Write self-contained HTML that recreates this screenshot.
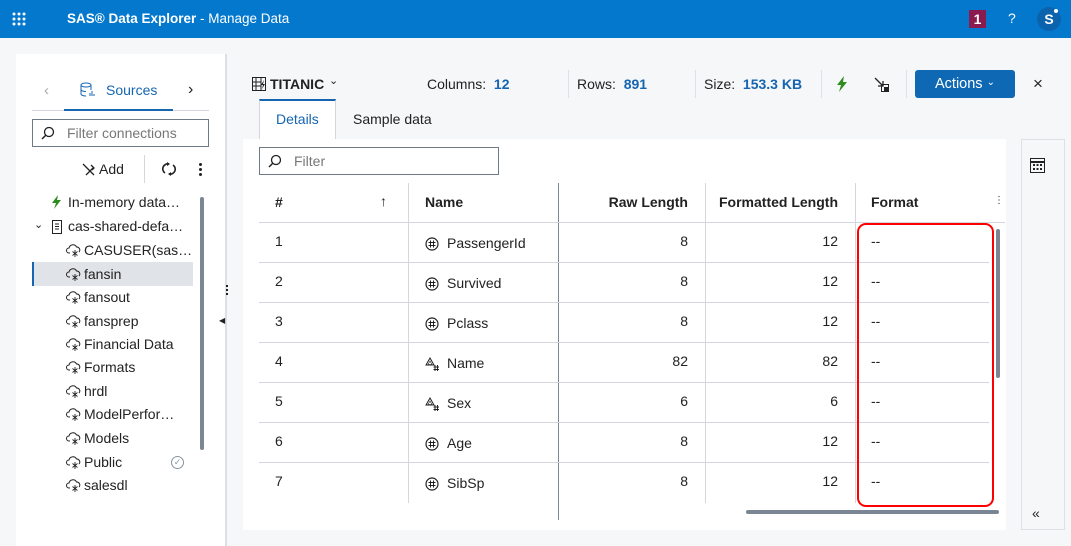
<!DOCTYPE html>
<html><head><meta charset="utf-8"><style>
*{box-sizing:border-box;margin:0;padding:0}
body{width:1071px;height:546px;overflow:hidden;background:#f6f7f9;font-family:"Liberation Sans",sans-serif;color:#222;font-size:14px;position:relative}
.a{position:absolute}
.hdr{left:0;top:0;width:1071px;height:38px;background:#0378cd;color:#fff}
.t{white-space:nowrap}
.cell{position:absolute;font-size:14px;white-space:nowrap}
.hl{position:absolute;height:1px;background:#d3d7dd}
.vl{position:absolute;width:1px;background:#d3d7dd}
</style></head><body>
<div class="a hdr">
 <svg class="a" style="left:12px;top:12px" width="14" height="14"><g fill="#fff"><circle cx="2" cy="2" r="1.5"/><circle cx="7" cy="2" r="1.5"/><circle cx="12" cy="2" r="1.5"/><circle cx="2" cy="7" r="1.5"/><circle cx="7" cy="7" r="1.5"/><circle cx="12" cy="7" r="1.5"/><circle cx="2" cy="12" r="1.5"/><circle cx="7" cy="12" r="1.5"/><circle cx="12" cy="12" r="1.5"/></g></svg>
 <div class="a t" style="left:67px;top:11px;font-size:13.5px"><b>SAS® Data Explorer</b> - Manage Data</div>
 <div class="a" style="left:969px;top:10px;width:17px;height:18px;background:#8b1a4e;color:#fff;font-weight:bold;font-size:14px;text-align:center;line-height:18px">1</div>
 <div class="a" style="left:1008px;top:10px;font-size:14px">?</div>
 <div class="a" style="left:1037px;top:7px;width:24px;height:24px;border-radius:12px;background:#0b62ad;text-align:center;line-height:24px;font-weight:bold;font-size:14px">S</div>
 <div class="a" style="left:1054px;top:9px;width:4px;height:4px;border-radius:2px;background:#fff"></div>
</div>

<div class="a" style="left:16px;top:54px;width:209px;height:492px;background:#fff"></div>
<div class="a" style="left:225px;top:54px;width:2px;height:492px;background:#dde0e4"></div>
<div class="a t" style="left:44px;top:82px;color:#aaa;font-size:15px">‹</div>
<svg class="a" style="left:80px;top:82px" width="16" height="16"><ellipse cx="6" cy="3" rx="5" ry="2" fill="none" stroke="#1565b0"/><path d="M1 3v9c0 1 2 2 5 2M11 3v5M1 7.5c0 1 2 2 5 2" fill="none" stroke="#1565b0"/><path d="M10 14v-3M12 14v-5M14 14v-2" stroke="#1565b0"/></svg>
<div class="a t" style="left:106px;top:82px;color:#1565b0;font-size:14px">Sources</div>
<div class="a t" style="left:188px;top:81px;font-size:16px">›</div>
<div class="a" style="left:32px;top:110px;width:177px;height:1px;background:#d3d7dd"></div>
<div class="a" style="left:64px;top:109px;width:109px;height:2px;background:#1565b0"></div>
<div class="a" style="left:32px;top:119px;width:177px;height:28px;border:1px solid #6f7a87"></div>
<svg class="a" style="left:41px;top:126px" width="14" height="14"><circle cx="8" cy="6" r="4.5" fill="none" stroke="#222" stroke-width="1.3"/><path d="M5 9l-4 4" stroke="#222" stroke-width="1.5"/></svg>
<div class="a t" style="left:67px;top:125px;color:#777">Filter connections</div>
<svg class="a" style="left:82px;top:163px" width="13" height="13"><path d="M1 1l11 11M4 12l7-7M9 2l3 3-2 2" fill="none" stroke="#222" stroke-width="1.3"/></svg>
<div class="a t" style="left:99px;top:161px;font-size:14px">Add</div>
<div class="a" style="left:144px;top:155px;width:1px;height:28px;background:#d3d7dd"></div>
<svg class="a" style="left:162px;top:162px" width="14" height="14"><path d="M3 11A5 5 0 0 1 7 2M11 3A5 5 0 0 1 7 12" fill="none" stroke="#222" stroke-width="1.6"/><path d="M5 0l3 2-3 2zM9 10l-3 2 3 2z" fill="#222"/></svg>
<div class="a" style="left:199px;top:163px;width:3px;height:3px;background:#222;box-shadow:0 5px 0 #222,0 10px 0 #222;border-radius:2px"></div>

<svg class="a" style="left:51px;top:195px" width="11" height="14"><path d="M7 0L1 8h4l-2 6 7-9H6z" fill="#2e8b1f"/></svg>
<div class="a t" style="left:68px;top:194px">In-memory data…</div>
<div class="a t" style="left:34px;top:218px;font-size:11px">⌄</div>
<svg class="a" style="left:52px;top:220px" width="10" height="14"><rect x="0.5" y="0.5" width="9" height="13" fill="none" stroke="#222"/><path d="M3 4h4M3 6.5h4M3 9h4" stroke="#222"/></svg>
<div class="a t" style="left:68px;top:218px">cas-shared-defa…</div>
<div class="a" style="left:32px;top:262px;width:161px;height:24px;background:#e0e3e7;border-left:2px solid #1565b0"></div>
<div class="a" style="left:200px;top:197px;width:4px;height:253px;background:#7b8694;border-radius:2px"></div>
<div class="a" style="left:226px;top:285px;width:2px;height:2px;background:#222;box-shadow:0 4px 0 #222,0 8px 0 #222"></div>
<div class="a t" style="left:219px;top:316px;font-size:8px">◀</div>

<div id="items"></div>

<svg class="a" style="left:252px;top:77px" width="14" height="14"><rect x="0.5" y="0.5" width="13" height="13" fill="none" stroke="#222"/><path d="M0 5h9M0 9h9M4 0v14M9 0v14" stroke="#222"/><path d="M12 3l-3 5h2l-1 4 3-5h-2z" fill="#222"/></svg>
<div class="a t" style="left:270px;top:76px;font-weight:bold;font-size:14px">TITANIC</div>
<div class="a t" style="left:329px;top:74px;font-size:11px">⌄</div>
<div class="a t" style="left:427px;top:76px">Columns:&nbsp; <b style="color:#1565b0">12</b></div>
<div class="a" style="left:568px;top:70px;width:1px;height:28px;background:#dde0e4"></div>
<div class="a t" style="left:577px;top:76px">Rows:&nbsp; <b style="color:#1565b0">891</b></div>
<div class="a" style="left:695px;top:70px;width:1px;height:28px;background:#dde0e4"></div>
<div class="a t" style="left:704px;top:76px">Size:&nbsp; <b style="color:#1565b0">153.3 KB</b></div>
<div class="a" style="left:821px;top:70px;width:1px;height:28px;background:#dde0e4"></div>
<svg class="a" style="left:836px;top:76px" width="12" height="16"><path d="M8 0L1 9h4l-2 7 8-10H7z" fill="#2e8b1f"/></svg>
<svg class="a" style="left:874px;top:77px" width="16" height="16"><path d="M1 1l8 8M9 4v5H4" fill="none" stroke="#222" stroke-width="1.3"/><rect x="7.5" y="7.5" width="7" height="7" fill="none" stroke="#222"/><rect x="10" y="10" width="5" height="5" fill="#222"/></svg>
<div class="a" style="left:906px;top:70px;width:1px;height:28px;background:#dde0e4"></div>
<div class="a t" style="left:915px;top:70px;width:100px;height:28px;background:#0e68b3;border-radius:3px;color:#fff;text-align:center;line-height:28px;font-size:14.5px">Actions <span style="font-size:10px;position:relative;top:-3px">⌄</span></div>
<div class="a t" style="left:1033px;top:74px;font-size:17px">×</div>

<div class="a" style="left:259px;top:99px;width:77px;height:41px;background:#fff;border:1px solid #d3d7dd;border-top:2px solid #1565b0;border-bottom:none"></div>
<div class="a t" style="left:276px;top:111px;color:#1565b0">Details</div>
<div class="a t" style="left:353px;top:111px">Sample data</div>

<div class="a" style="left:243px;top:139px;width:763px;height:391px;background:#fff"></div>
<div class="a" style="left:1021px;top:139px;width:44px;height:391px;background:#f6f7f9;border:1px solid #dde0e4"></div>
<svg class="a" style="left:1030px;top:158px" width="15" height="15"><rect x="0.5" y="0.5" width="14" height="14" fill="none" stroke="#222"/><path d="M0 4h15" stroke="#222" stroke-width="2"/><g fill="#222"><rect x="3" y="6" width="2" height="2"/><rect x="6.5" y="6" width="2" height="2"/><rect x="10" y="6" width="2" height="2"/><rect x="3" y="10" width="2" height="2"/><rect x="6.5" y="10" width="2" height="2"/><rect x="10" y="10" width="2" height="2"/></g></svg>
<div class="a t" style="left:1032px;top:505px;font-size:14px">«</div>

<div class="a" style="left:259px;top:147px;width:240px;height:28px;border:1px solid #6f7a87"></div>
<svg class="a" style="left:268px;top:154px" width="14" height="14"><circle cx="8" cy="6" r="4.5" fill="none" stroke="#222" stroke-width="1.3"/><path d="M5 9l-4 4" stroke="#222" stroke-width="1.5"/></svg>
<div class="a t" style="left:294px;top:153px;color:#777">Filter</div>

<div id="tbl"></div>
<div class="a" style="left:857px;top:223px;width:137px;height:284px;border:2px solid #f00;border-radius:9px"></div>
<div class="a" style="left:996px;top:229px;width:4px;height:149px;background:#7b8694;border-radius:2px"></div>
<div class="a" style="left:746px;top:510px;width:253px;height:4px;background:#7b8694;border-radius:2px"></div>

<script>
var it=["CASUSER(sas…","fansin","fansout","fansprep","Financial Data","Formats","hrdl","ModelPerfor…","Models","Public","salesdl"];
var h="",y=[242,266,289,313,336,359,383,406,430,454,477];
var cloud='<svg width="16" height="14"><path d="M4 10H3a2.5 2.5 0 0 1 0-5 4 4 0 0 1 7.5-1A3 3 0 0 1 13 9" fill="none" stroke="#222"/><path d="M9 7v7M6.5 8.5l5 4M11.5 8.5l-5 4" stroke="#222" stroke-width="0.9"/></svg>';
it.forEach(function(s,i){h+='<div class="a" style="left:66px;top:'+(y[i]+1)+'px">'+cloud+'</div><div class="a t" style="left:84px;top:'+y[i]+'px">'+s+'</div>';});
h+='<div class="a" style="left:171px;top:456px;width:13px;height:13px;border:1.5px solid #8a94a0;border-radius:7px;font-size:9px;color:#8a94a0;text-align:center;line-height:10px">✓</div>';
document.getElementById("items").outerHTML=h;
var t="";
var rows=[["1","PassengerId","8","12",0],["2","Survived","8","12",0],["3","Pclass","8","12",0],["4","Name","82","82",1],["5","Sex","6","6",1],["6","Age","8","12",0],["7","SibSp","8","12",0]];
t+='<div class="cell" style="left:275px;top:194px;font-weight:bold">#</div><div class="cell" style="left:380px;top:193px">↑</div>';
t+='<div class="cell" style="left:425px;top:194px;font-weight:bold">Name</div>';
t+='<div class="cell" style="left:558px;width:130px;text-align:right;top:194px;font-weight:bold">Raw Length</div>';
t+='<div class="cell" style="left:705px;width:133px;text-align:right;top:194px;font-weight:bold">Formatted Length</div>';
t+='<div class="cell" style="left:871px;top:194px;font-weight:bold">Format</div><div class="cell" style="left:994px;top:195px;font-size:10px">⋮</div>';
t+='<div class="vl" style="left:408px;top:183px;height:320px"></div><div class="vl" style="left:558px;top:183px;height:337px;background:#7b8694"></div><div class="vl" style="left:705px;top:183px;height:320px"></div><div class="vl" style="left:855px;top:183px;height:320px"></div>';
t+='<div class="hl" style="left:259px;top:222px;width:746px"></div>';
var num='<svg width="14" height="14"><circle cx="7" cy="7" r="6" fill="none" stroke="#222" stroke-width="1.2"/><path d="M5.5 3.5v7M8.5 3.5v7M3.5 5.5h7M3.5 8.5h7" stroke="#222"/></svg>';
var chr='<svg width="14" height="14"><path d="M5 1L1 8h8z" fill="none" stroke="#222"/><path d="M5 4l-2 3.5h4z" fill="none" stroke="#222" stroke-width="0.6"/><path d="M10 8v6M12.5 8v6M8.5 10h5.5M8.5 12.5h5.5" stroke="#222"/></svg>';
rows.forEach(function(r,i){var y=233+i*40;
t+='<div class="cell" style="left:275px;top:'+y+'px">'+r[0]+'</div>';
t+='<div class="cell" style="left:425px;top:'+(y+4)+'px">'+(r[4]?chr:num)+'</div><div class="cell" style="left:447px;top:'+(y+2)+'px">'+r[1]+'</div>';
t+='<div class="cell" style="left:558px;width:130px;text-align:right;top:'+y+'px">'+r[2]+'</div>';
t+='<div class="cell" style="left:705px;width:133px;text-align:right;top:'+y+'px">'+r[3]+'</div>';
t+='<div class="cell" style="left:871px;top:'+y+'px">--</div>';
if(i<6)t+='<div class="hl" style="left:259px;top:'+(262+i*40)+'px;width:730px"></div>';});
document.getElementById("tbl").outerHTML=t;
</script>
</body></html>
